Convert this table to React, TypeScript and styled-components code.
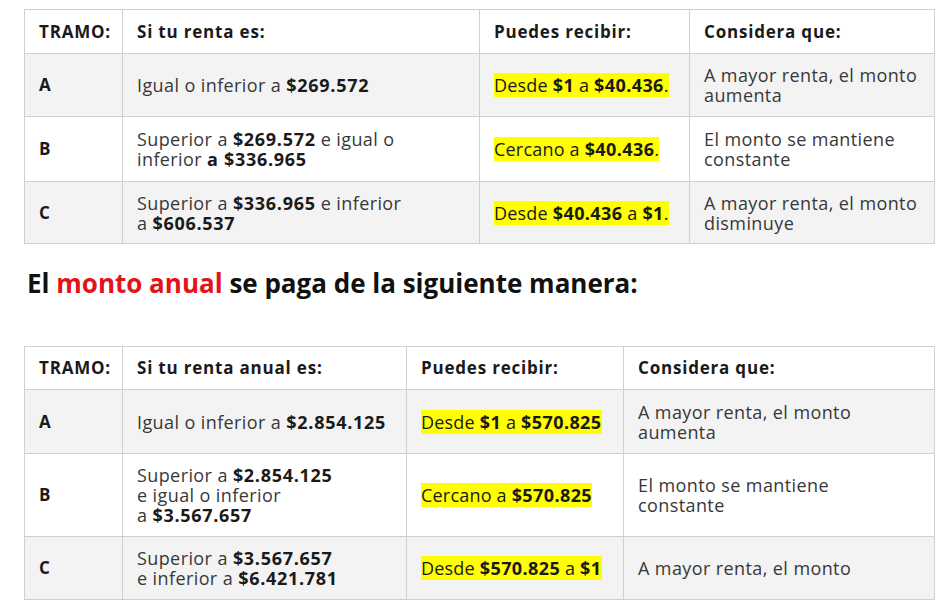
import React from "react";
import styled, { createGlobalStyle } from "styled-components";

const GlobalStyle = createGlobalStyle`
  html, body {
    margin: 0;
    padding: 0;
    background: #fff;
  }
  body {
    font-family: "Open Sans", "Liberation Sans", sans-serif;
    color: #222;
  }
`;

const Page = styled.div`
  padding: 9px 17px 0 24px;
  width: 910px;
`;

const Table = styled.table`
  width: 910px;
  border-collapse: collapse;
  table-layout: fixed;
  font-size: 18px;
  line-height: 20px;
  color: #383838;
`;

const Row = styled.tr<{ $shade?: boolean; $h: number }>`
  height: ${(p) => p.$h}px;
  background: ${(p) => (p.$shade ? "#f3f3f3" : "#fff")};
`;

const Th = styled.th`
  border: 1px solid #d0d0d0;
  padding: 0 14px;
  text-align: left;
  font-weight: 700;
  font-size: 17px;
  letter-spacing: 0.8px;
  color: #1a1a1a;
`;

const Td = styled.td`
  border: 1px solid #d0d0d0;
  padding: 0 12px 0 14px;
  vertical-align: middle;
  font-weight: 400;
  letter-spacing: 0.4px;

  b {
    color: #1a1a1a;
    letter-spacing: 0.7px;
  }
`;

const TramoCell = styled(Td)`
  font-weight: 700;
  font-size: 17px;
  color: #1a1a1a;
`;

const Mark = styled.span`
  background: #ffff00;
  color: #1a1a1a;
  white-space: nowrap;
  letter-spacing: 0.2px;

  b {
    letter-spacing: 0.4px;
  }
`;

const Heading = styled.h2`
  margin: 26px 0 0 3px;
  height: 76px;
  font-family: "Open Sans", sans-serif;
  font-size: 26px;
  line-height: 26px;
  font-weight: 700;
  color: #111;
`;

const Red = styled.span`
  color: #e3131b;
`;

type RowData = {
  tramo: string;
  renta: React.ReactNode;
  recibir: React.ReactNode;
  considera: React.ReactNode;
  h: number;
};

const RentTable: React.FC<{ cols: number[]; head: string; headH: number; rows: RowData[] }> = ({
  cols,
  head,
  headH,
  rows,
}) => (
  <Table>
    <colgroup>
      {cols.map((w, i) => (
        <col key={i} style={{ width: w }} />
      ))}
    </colgroup>
    <thead>
      <Row $h={headH}>
        <Th>TRAMO:</Th>
        <Th>{head}</Th>
        <Th>Puedes recibir:</Th>
        <Th>Considera que:</Th>
      </Row>
    </thead>
    <tbody>
      {rows.map((r, i) => (
        <Row key={r.tramo} $h={r.h} $shade={i % 2 === 0}>
          <TramoCell>{r.tramo}</TramoCell>
          <Td>{r.renta}</Td>
          <Td>
            <Mark>{r.recibir}</Mark>
          </Td>
          <Td>{r.considera}</Td>
        </Row>
      ))}
    </tbody>
  </Table>
);

const mensual: RowData[] = [
  {
    tramo: "A",
    h: 63,
    renta: (
      <>
        Igual o inferior a <b>$269.572</b>
      </>
    ),
    recibir: (
      <>
        Desde <b>$1</b> a <b>$40.436</b>.
      </>
    ),
    considera: (
      <>
        A mayor renta, el monto
        <br />
        aumenta
      </>
    ),
  },
  {
    tramo: "B",
    h: 65,
    renta: (
      <>
        Superior a <b>$269.572</b> e igual o
        <br />
        inferior <b>a $336.965</b>
      </>
    ),
    recibir: (
      <>
        Cercano a <b>$40.436</b>.
      </>
    ),
    considera: (
      <>
        El monto se mantiene
        <br />
        constante
      </>
    ),
  },
  {
    tramo: "C",
    h: 62,
    renta: (
      <>
        Superior a <b>$336.965</b> e inferior
        <br />a <b>$606.537</b>
      </>
    ),
    recibir: (
      <>
        Desde <b>$40.436</b> a <b>$1</b>.
      </>
    ),
    considera: (
      <>
        A mayor renta, el monto
        <br />
        disminuye
      </>
    ),
  },
];

const anual: RowData[] = [
  {
    tramo: "A",
    h: 64,
    renta: (
      <>
        Igual o inferior a <b>$2.854.125</b>
      </>
    ),
    recibir: (
      <>
        Desde <b>$1</b> a <b>$570.825</b>
      </>
    ),
    considera: (
      <>
        A mayor renta, el monto
        <br />
        aumenta
      </>
    ),
  },
  {
    tramo: "B",
    h: 83,
    renta: (
      <>
        Superior a <b>$2.854.125</b>
        <br />e igual o inferior
        <br />a <b>$3.567.657</b>
      </>
    ),
    recibir: (
      <>
        Cercano a <b>$570.825</b>
      </>
    ),
    considera: (
      <>
        El monto se mantiene
        <br />
        constante
      </>
    ),
  },
  {
    tramo: "C",
    h: 63,
    renta: (
      <>
        Superior a <b>$3.567.657</b>
        <br />e inferior a <b>$6.421.781</b>
      </>
    ),
    recibir: (
      <>
        Desde <b>$570.825</b> a <b>$1</b>
      </>
    ),
    considera: "A mayor renta, el monto",
  },
];

export default function App() {
  return (
    <Page>
      <GlobalStyle />
      <RentTable cols={[98, 357, 210, 245]} head="Si tu renta es:" headH={44} rows={mensual} />
      <Heading>
        El <Red>monto anual</Red> se paga de la siguiente manera:
      </Heading>
      <RentTable cols={[98, 284, 217, 311]} head="Si tu renta anual es:" headH={43} rows={anual} />
    </Page>
  );
}
